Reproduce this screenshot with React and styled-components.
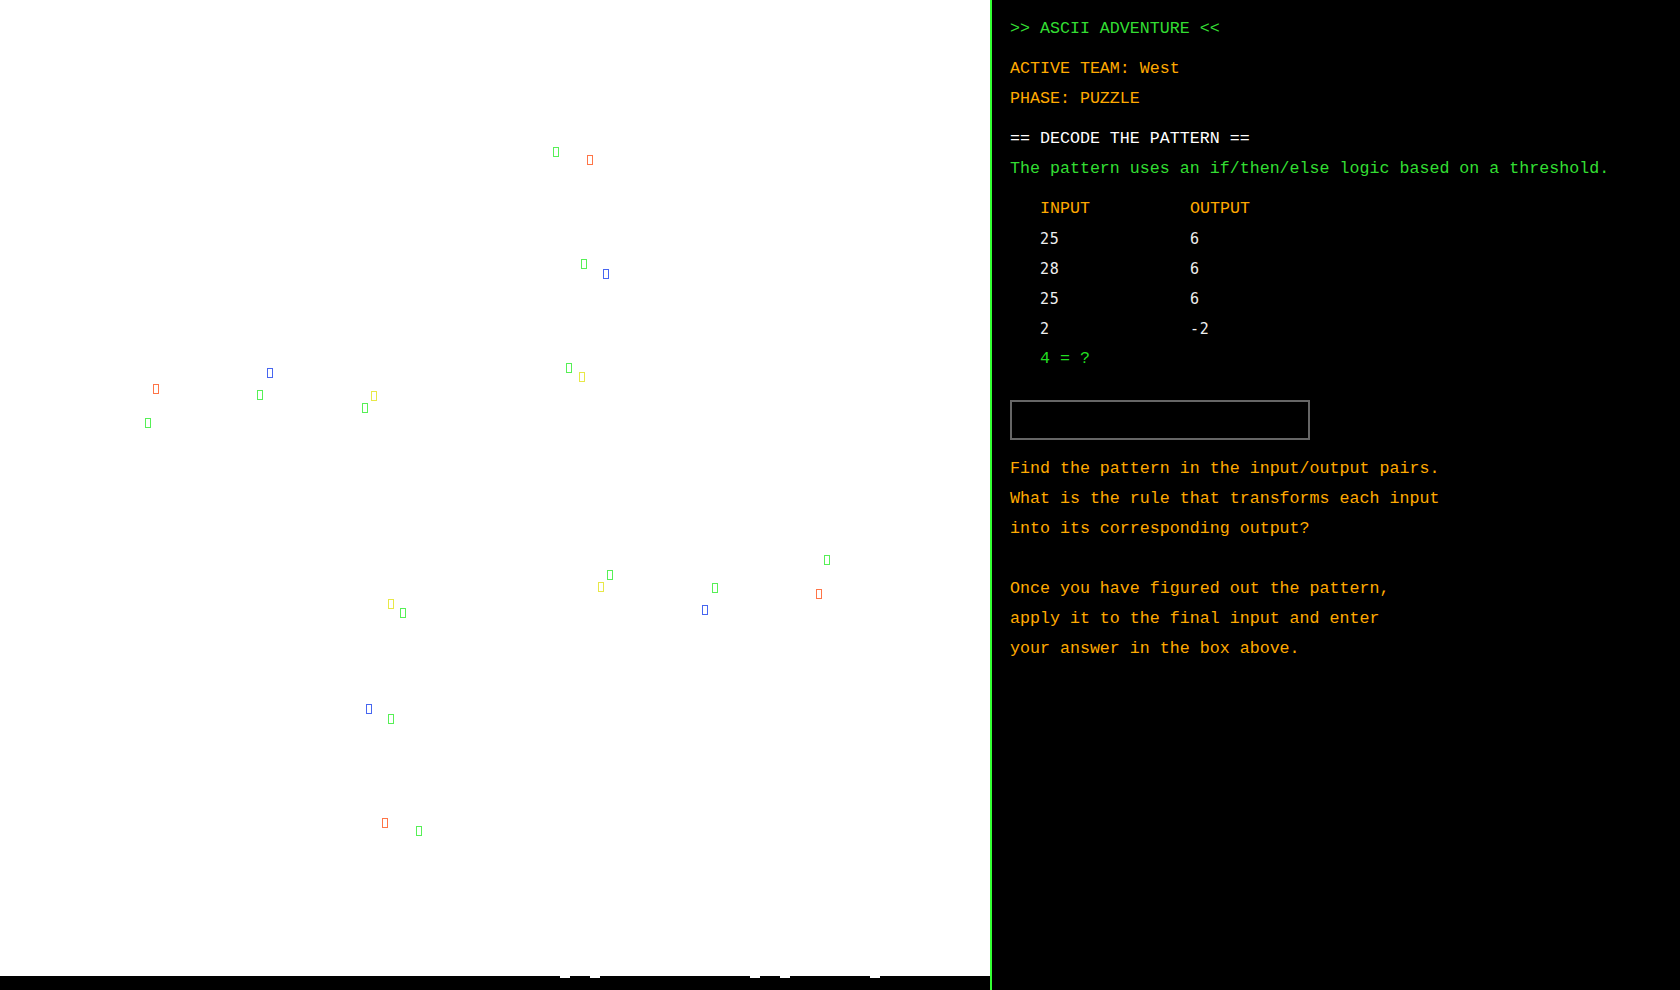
import React from "react";
import styled, { createGlobalStyle } from "styled-components";

const GlobalStyle = createGlobalStyle`
  html, body {
    margin: 0;
    padding: 0;
    height: 100%;
    overflow: hidden;
    background: #000;
  }
  #root {
    height: 100%;
  }
`;

const Page = styled.div`
  display: flex;
  width: 100vw;
  height: 100vh;
  font-family: "Liberation Mono", "Courier New", monospace;
`;

const Stage = styled.div`
  width: 990px;
  flex: none;
  display: flex;
  flex-direction: column;
  border-right: 2px solid #33ff33;
`;

const Field = styled.div`
  flex: 1;
  position: relative;
  background: #ffffff;
`;

const Tofu = styled.span`
  position: absolute;
  width: 6px;
  height: 10px;
  box-sizing: border-box;
  border: 1.5px solid ${(p) => p.$c};
  opacity: 0.9;
`;

const Strip = styled.div`
  height: 14px;
  background: #000;
  position: relative;
`;

const Notch = styled.span`
  position: absolute;
  top: 0;
  width: 10px;
  height: 2px;
  background: #ffffff;
`;

const Panel = styled.div`
  flex: 1;
  background: #000;
  padding: 14px 18px 0 18px;
  display: flex;
  flex-direction: column;
`;

const Line = styled.div`
  height: 30px;
  line-height: 30px;
  font-size: 16.65px;
  white-space: pre;
  color: ${(p) => p.$c || "#ffaa00"};
  margin-top: ${(p) => p.$gap || 0}px;
`;

const Table = styled.div`
  display: grid;
  grid-template-columns: 150px auto;
  padding-left: 30px;
  margin-top: 10px;
`;

const Head = styled.div`
  height: 30px;
  line-height: 30px;
  font-size: 16.65px;
  color: #ffaa00;
`;

const Cell = styled.div`
  height: 30px;
  line-height: 30px;
  font-family: "DejaVu Sans Mono", monospace;
  font-size: 15px;
  letter-spacing: 0.8px;
  color: #eeeeee;
`;

const Query = styled.div`
  grid-column: 1 / span 2;
  height: 30px;
  line-height: 30px;
  font-size: 16.65px;
  color: #22dd22;
  white-space: pre;
`;

const Answer = styled.input`
  width: 300px;
  height: 40px;
  box-sizing: border-box;
  margin-top: 26px;
  margin-bottom: 14px;
  background: #000;
  border: 2px solid #666666;
  outline: none;
  color: #33ff33;
  font-family: "Liberation Mono", monospace;
  font-size: 16px;
  padding: 0 8px;
`;

const GREEN = "#44ee44";
const ORANGE = "#ff6633";
const BLUE = "#3355ee";
const YELLOW = "#e6e633";

const tofus = [
  [553, 147, GREEN],
  [587, 155, ORANGE],
  [581, 259, GREEN],
  [603, 269, BLUE],
  [153, 384, ORANGE],
  [267, 368, BLUE],
  [257, 390, GREEN],
  [371, 391, YELLOW],
  [362, 403, GREEN],
  [145, 418, GREEN],
  [566, 363, GREEN],
  [579, 372, YELLOW],
  [824, 555, GREEN],
  [607, 570, GREEN],
  [598, 582, YELLOW],
  [712, 583, GREEN],
  [816, 589, ORANGE],
  [702, 605, BLUE],
  [388, 599, YELLOW],
  [400, 608, GREEN],
  [366, 704, BLUE],
  [388, 714, GREEN],
  [382, 818, ORANGE],
  [416, 826, GREEN],
];

const notches = [560, 590, 750, 780, 870];

const rows = [
  ["25", "6"],
  ["28", "6"],
  ["25", "6"],
  ["2", "-2"],
];

export default function App() {
  return (
    <Page>
      <GlobalStyle />
      <Stage>
        <Field>
          {tofus.map(([x, y, c], i) => (
            <Tofu key={i} $c={c} style={{ left: x, top: y }} />
          ))}
        </Field>
        <Strip>
          {notches.map((x) => (
            <Notch key={x} style={{ left: x }} />
          ))}
        </Strip>
      </Stage>
      <Panel>
        <Line $c="#33dd33">{">> ASCII ADVENTURE <<"}</Line>
        <Line $gap={10}>ACTIVE TEAM: West</Line>
        <Line>PHASE: PUZZLE</Line>
        <Line $gap={10} $c="#ffffff">== DECODE THE PATTERN ==</Line>
        <Line $c="#33dd33">The pattern uses an if/then/else logic based on a threshold.</Line>
        <Table>
          <Head>INPUT</Head>
          <Head>OUTPUT</Head>
          {rows.map(([a, b], i) => (
            <React.Fragment key={i}>
              <Cell>{a}</Cell>
              <Cell>{b}</Cell>
            </React.Fragment>
          ))}
          <Query>{"4 = ?"}</Query>
        </Table>
        <Answer type="text" />
        <Line>Find the pattern in the input/output pairs.</Line>
        <Line>What is the rule that transforms each input</Line>
        <Line>into its corresponding output?</Line>
        <Line $gap={30}>Once you have figured out the pattern,</Line>
        <Line>apply it to the final input and enter</Line>
        <Line>your answer in the box above.</Line>
      </Panel>
    </Page>
  );
}
